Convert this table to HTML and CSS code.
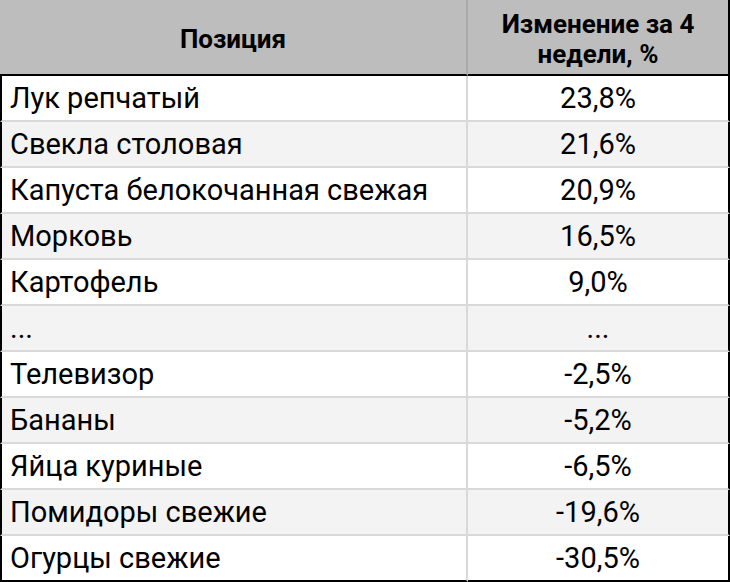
FILE: index.html
```html
<!DOCTYPE html>
<html lang="ru">
<head>
<meta charset="utf-8">
<link rel="stylesheet" href="styles.css">
</head>
<body>
<table class="tbl">
  <colgroup><col class="c1"><col class="c2"></colgroup>
  <thead>
    <tr><th class="h1">Позиция</th><th class="h2">Изменение за 4<br>недели, %</th></tr>
  </thead>
  <tbody>
    <tr><td class="name">Лук репчатый</td><td class="val">23,8%</td></tr>
    <tr class="alt"><td class="name">Свекла столовая</td><td class="val">21,6%</td></tr>
    <tr><td class="name">Капуста белокочанная свежая</td><td class="val">20,9%</td></tr>
    <tr class="alt"><td class="name">Морковь</td><td class="val">16,5%</td></tr>
    <tr><td class="name">Картофель</td><td class="val">9,0%</td></tr>
    <tr class="alt"><td class="name">...</td><td class="val">...</td></tr>
    <tr><td class="name">Телевизор</td><td class="val">-2,5%</td></tr>
    <tr class="alt"><td class="name">Бананы</td><td class="val">-5,2%</td></tr>
    <tr><td class="name">Яйца куриные</td><td class="val">-6,5%</td></tr>
    <tr class="alt"><td class="name">Помидоры свежие</td><td class="val">-19,6%</td></tr>
    <tr class="last"><td class="name">Огурцы свежие</td><td class="val">-30,5%</td></tr>
  </tbody>
</table>
</body>
</html>
```
FILE: styles.css
```css
html, body {
  margin: 0;
  padding: 0;
  background: #ffffff;
}
.tbl {
  border-collapse: separate;
  border-spacing: 0;
  table-layout: fixed;
  width: 730px;
  font-family: Roboto, "Liberation Sans", sans-serif;
  color: #000;
}
.c1 { width: 468px; }
.c2 { width: 262px; }
.tbl th, .tbl td {
  box-sizing: border-box;
  padding: 0;
}
.tbl th {
  background: #bdbdbd;
  height: 76px;
  padding-top: 4px;
  font-weight: 700;
  font-size: 26px;
  line-height: 30px;
  text-align: center;
  vertical-align: middle;
  border-bottom: 2px solid #000;
}
.h1 {
  border-right: 2px solid #a9a9a9;
}
.h2 {
  border-right: 2px solid #000;
}
.tbl td {
  height: 46px;
  font-size: 29px;
  line-height: 34px;
  vertical-align: middle;
  border-bottom: 2px solid #d9d9d9;
}
.name {
  border-left: 2px solid #000;
  border-right: 2px solid #d9d9d9;
  padding-left: 8px !important;
  text-align: left;
  white-space: nowrap;
}
.val {
  border-right: 2px solid #000;
  text-align: center;
}
.alt td {
  background: #f3f3f3;
}
.last td {
  border-bottom: 2px solid #000;
}
```
